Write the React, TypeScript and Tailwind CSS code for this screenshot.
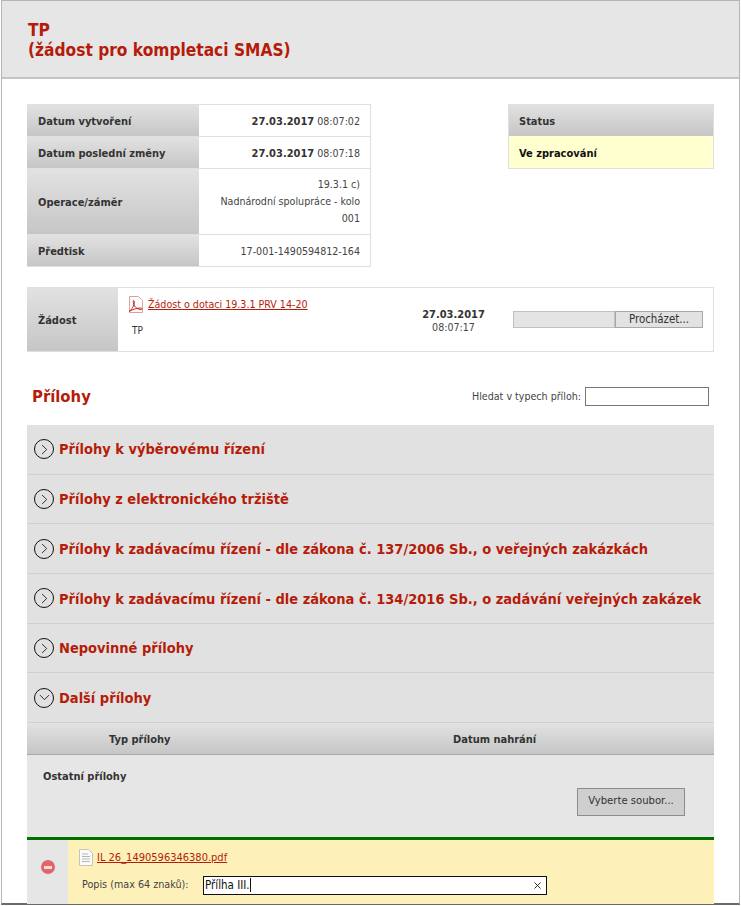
import { ChevronDown, ChevronRight, X } from "lucide-react";

const sans = "font-['DejaVu_Sans_Condensed','Noto_Sans',sans-serif]";
const boldFont = "font-['DejaVu_Sans_Condensed','DejaVu_Sans',sans-serif] font-bold";
const labelFont = `${boldFont} text-[11px] text-[#333]`;
const headGradient = "bg-gradient-to-b from-[#e2e2e2] to-[#c6c6c6]";

const infoRows = [
  { label: "Datum vytvoření", date: "27.03.2017", time: "08:07:02" },
  { label: "Datum poslední změny", date: "27.03.2017", time: "08:07:18" },
];

const sections = [
  "Přílohy k výběrovému řízení",
  "Přílohy z elektronického tržiště",
  "Přílohy k zadávacímu řízení - dle zákona č. 137/2006 Sb., o veřejných zakázkách",
  "Přílohy k zadávacímu řízení - dle zákona č. 134/2016 Sb., o zadávání veřejných zakázek",
  "Nepovinné přílohy",
];

function PdfIcon() {
  return (
    <svg width="16" height="17" viewBox="0 0 16 17" fill="none">
      <path d="M1.5 .5h9l4 4v12h-13z" fill="#fff" stroke="#d9a0a0" />
      <path
        d="M1 15.5c2-1 4-4 5-7 .4-1.500.3-4-.3-4-.8 0-.6 3 .8 5.500 1.200 2 3.500 3.300 6.500 3.500 1.500 0 1.300-1.500-.5-1.500-3 0-7 1-11.500 3.500z"
        stroke="#c8261c"
        strokeWidth="1"
      />
    </svg>
  );
}

function DocIcon() {
  return (
    <svg width="14" height="17" viewBox="0 0 14 17" fill="none">
      <path d="M.5 .5h9l4 4v12H.5z" fill="#fbfbfb" stroke="#c4c4c4" />
      <path d="M3 5h6M3 7.500h8M3 10h8M3 12.500h8" stroke="#b5b5b5" />
    </svg>
  );
}

function SectionHeader({ title, open }: { title: string; open?: boolean }) {
  return (
    <div className="flex h-[49.7px] items-center gap-[5px] border-b border-[#d0d0d0] pl-[7px]">
      <span className="flex h-5 w-5 shrink-0 items-center justify-center rounded-full border border-[#111]">
        {open ? (
          <ChevronDown size={17} strokeWidth={1.2} className="text-[#111]" />
        ) : (
          <ChevronRight size={17} strokeWidth={1.2} className="text-[#111]" />
        )}
      </span>
      <span className={`${boldFont} pt-[2px] text-[14.5px] whitespace-nowrap text-[#b51c0a]`}>{title}</span>
    </div>
  );
}

export default function App() {
  return (
    <div className={`h-[906px] w-[741px] overflow-hidden bg-white ${sans}`}>
      <div className="ml-px flex h-[905px] w-[739px] flex-col border-x border-t border-[#b5b5b5] border-b-2 border-b-[#6a6a6a]">
        <div className="h-[78px] shrink-0 border-b-2 border-[#c4c4c4] bg-[#e6e6e6] pt-[19px] pl-[26px]">
          <h1 className={`${boldFont} text-[17.2px] leading-[20px] text-[#b51c0a]`}>
            TP
            <br />
            (žádost pro kompletaci SMAS)
          </h1>
        </div>

        <div className="ml-[25px] w-[687px] pt-[25px]">
          <div className="flex items-start justify-between">
            <div className="w-[344px] border-r border-b border-[#dfdfdf]">
              {infoRows.map((r) => (
                <div key={r.label} className="flex h-8 border-t border-[#dfdfdf]">
                  <div className={`flex w-[172px] items-center pt-[3px] pl-[11px] ${headGradient} ${labelFont}`}>{r.label}</div>
                  <div className="flex flex-1 items-center justify-end pt-[3px] pr-[10px] text-[10.6px] text-[#444]">
                    <b className={`mr-[3px] ${labelFont}`}>{r.date}</b>
                    {r.time}
                  </div>
                </div>
              ))}
              <div className="flex h-[66px] border-t border-[#dfdfdf]">
                <div className={`flex w-[172px] items-center pt-[3px] pl-[11px] ${headGradient} ${labelFont}`}>Operace/záměr</div>
                <div className="flex flex-1 flex-col justify-center pr-[10px] pl-4 text-right text-[10.6px] leading-[17px] text-[#444]">
                  <div>19.3.1 c)</div>
                  <div>Nadnárodní spolupráce - kolo</div>
                  <div>001</div>
                </div>
              </div>
              <div className="flex h-8 border-t border-[#dfdfdf]">
                <div className={`flex w-[172px] items-center pt-[3px] pl-[11px] ${headGradient} ${labelFont}`}>Předtisk</div>
                <div className="flex flex-1 items-center justify-end pt-[3px] pr-[10px] text-[10.6px] text-[#444]">17-001-1490594812-164</div>
              </div>
            </div>

            <div className="w-[206px] border-r border-b border-l border-[#dfdfdf]">
              <div className={`flex h-8 items-center pt-[4px] pl-[10px] ${headGradient} ${labelFont}`}>Status</div>
              <div className={`flex h-8 items-center bg-[#ffffcf] pt-[4px] pl-[10px] ${boldFont} text-[11px] text-[#111]`}>
                Ve zpracování
              </div>
            </div>
          </div>

          <div className="mt-5 flex h-[65px] border-y border-r border-[#dfdfdf]">
            <div className={`flex w-[91px] shrink-0 items-center pt-[3px] pl-[11px] ${headGradient} ${labelFont}`}>Žádost</div>
            <div className="w-[296px] pt-[8px] pl-[10px]">
              <div className="flex items-center gap-[4px]">
                <PdfIcon />
                <a className="pt-[1px] text-[10.6px] whitespace-nowrap text-[#b51c0a] underline">Žádost o dotaci 19.3.1 PRV 14-20</a>
              </div>
              <div className="mt-[10px] pl-[4px] text-[10px] text-[#333]">TP</div>
            </div>
            <div className="flex w-[79px] flex-col items-center justify-center pt-[2px] text-[10.6px] leading-[12px] text-[#444]">
              <b className={labelFont}>27.03.2017</b>
              <span>08:07:17</span>
            </div>
            <div className="ml-[20px] flex items-center">
              <div className="h-[17px] w-[102px] border border-[#c0c0c0] bg-[#e4e4e4]" />
              <div className="flex h-[17px] w-[88px] items-center justify-center border border-[#a8a8a8] bg-[#e2e2e2] pt-[1px] text-[11.4px] text-[#333]">
                Procházet...
              </div>
            </div>
          </div>

          <div className="flex h-[73px] items-center justify-between px-[5px] pt-4">
            <h2 className={`${boldFont} pt-[2px] text-[16.5px] text-[#b51c0a]`}>Přílohy</h2>
            <label className="flex items-center gap-1 text-[10.6px] text-[#444]">
              Hledat v typech příloh:
              <span className="h-[19px] w-[124px] border border-[#777] bg-white" />
            </label>
          </div>

          <div className="bg-[#e1e1e1]">
            {sections.map((s) => (
              <SectionHeader key={s} title={s} />
            ))}
            <SectionHeader title="Další přílohy" open />

            <div className={`flex h-8 items-center border-b border-[#a8a8a8] pt-[3px] ${headGradient} ${labelFont}`}>
              <span className="ml-[82px] w-[344px]">Typ přílohy</span>
              <span>Datum nahrání</span>
            </div>

            <div className="h-[82px] bg-[#e6e6e6] pt-[14px] pl-4">
              <div className={labelFont}>Ostatní přílohy</div>
              <div className="mt-[2px] flex justify-end pr-[29px]">
                <div className="flex h-7 w-[108px] items-center justify-center border border-[#8c8c8c] bg-[#cfcfcf] text-[11.2px] text-[#333]">
                  Vyberte soubor...
                </div>
              </div>
            </div>

            <div className="flex h-[67px] border-t-[3px] border-[#006f00]">
              <div className="flex w-[41px] shrink-0 justify-center bg-[#e6e6e6] pt-5">
                <span className="flex h-[14px] w-[14px] items-center justify-center rounded-full bg-[#e0666a]">
                  <span className="h-[3px] w-2 bg-[#f5dada]" />
                </span>
              </div>
              <div className="flex-1 bg-[#fdf0b8] pt-[9px] pl-[11px]">
                <div className="flex items-center gap-[4px]">
                  <DocIcon />
                  <a className="pt-[1px] text-[11px] text-[#b51c0a] underline">IL 26_1490596346380.pdf</a>
                </div>
                <div className="mt-[9px] flex items-center">
                  <span className="w-[124px] pl-[3px] text-[10.7px] text-[#444]">Popis (max 64 znaků):</span>
                  <div className="flex h-[19px] w-[344px] items-center justify-between border border-[#111] bg-white pr-[3px] pl-[1px] text-[11.5px] text-[#111]">
                    <span className="border-r border-[#111] leading-[14px]">Přílha III.</span>
                    <X size={11} strokeWidth={2} className="text-[#222]" />
                  </div>
                </div>
              </div>
            </div>
          </div>
        </div>
      </div>
    </div>
  );
}
